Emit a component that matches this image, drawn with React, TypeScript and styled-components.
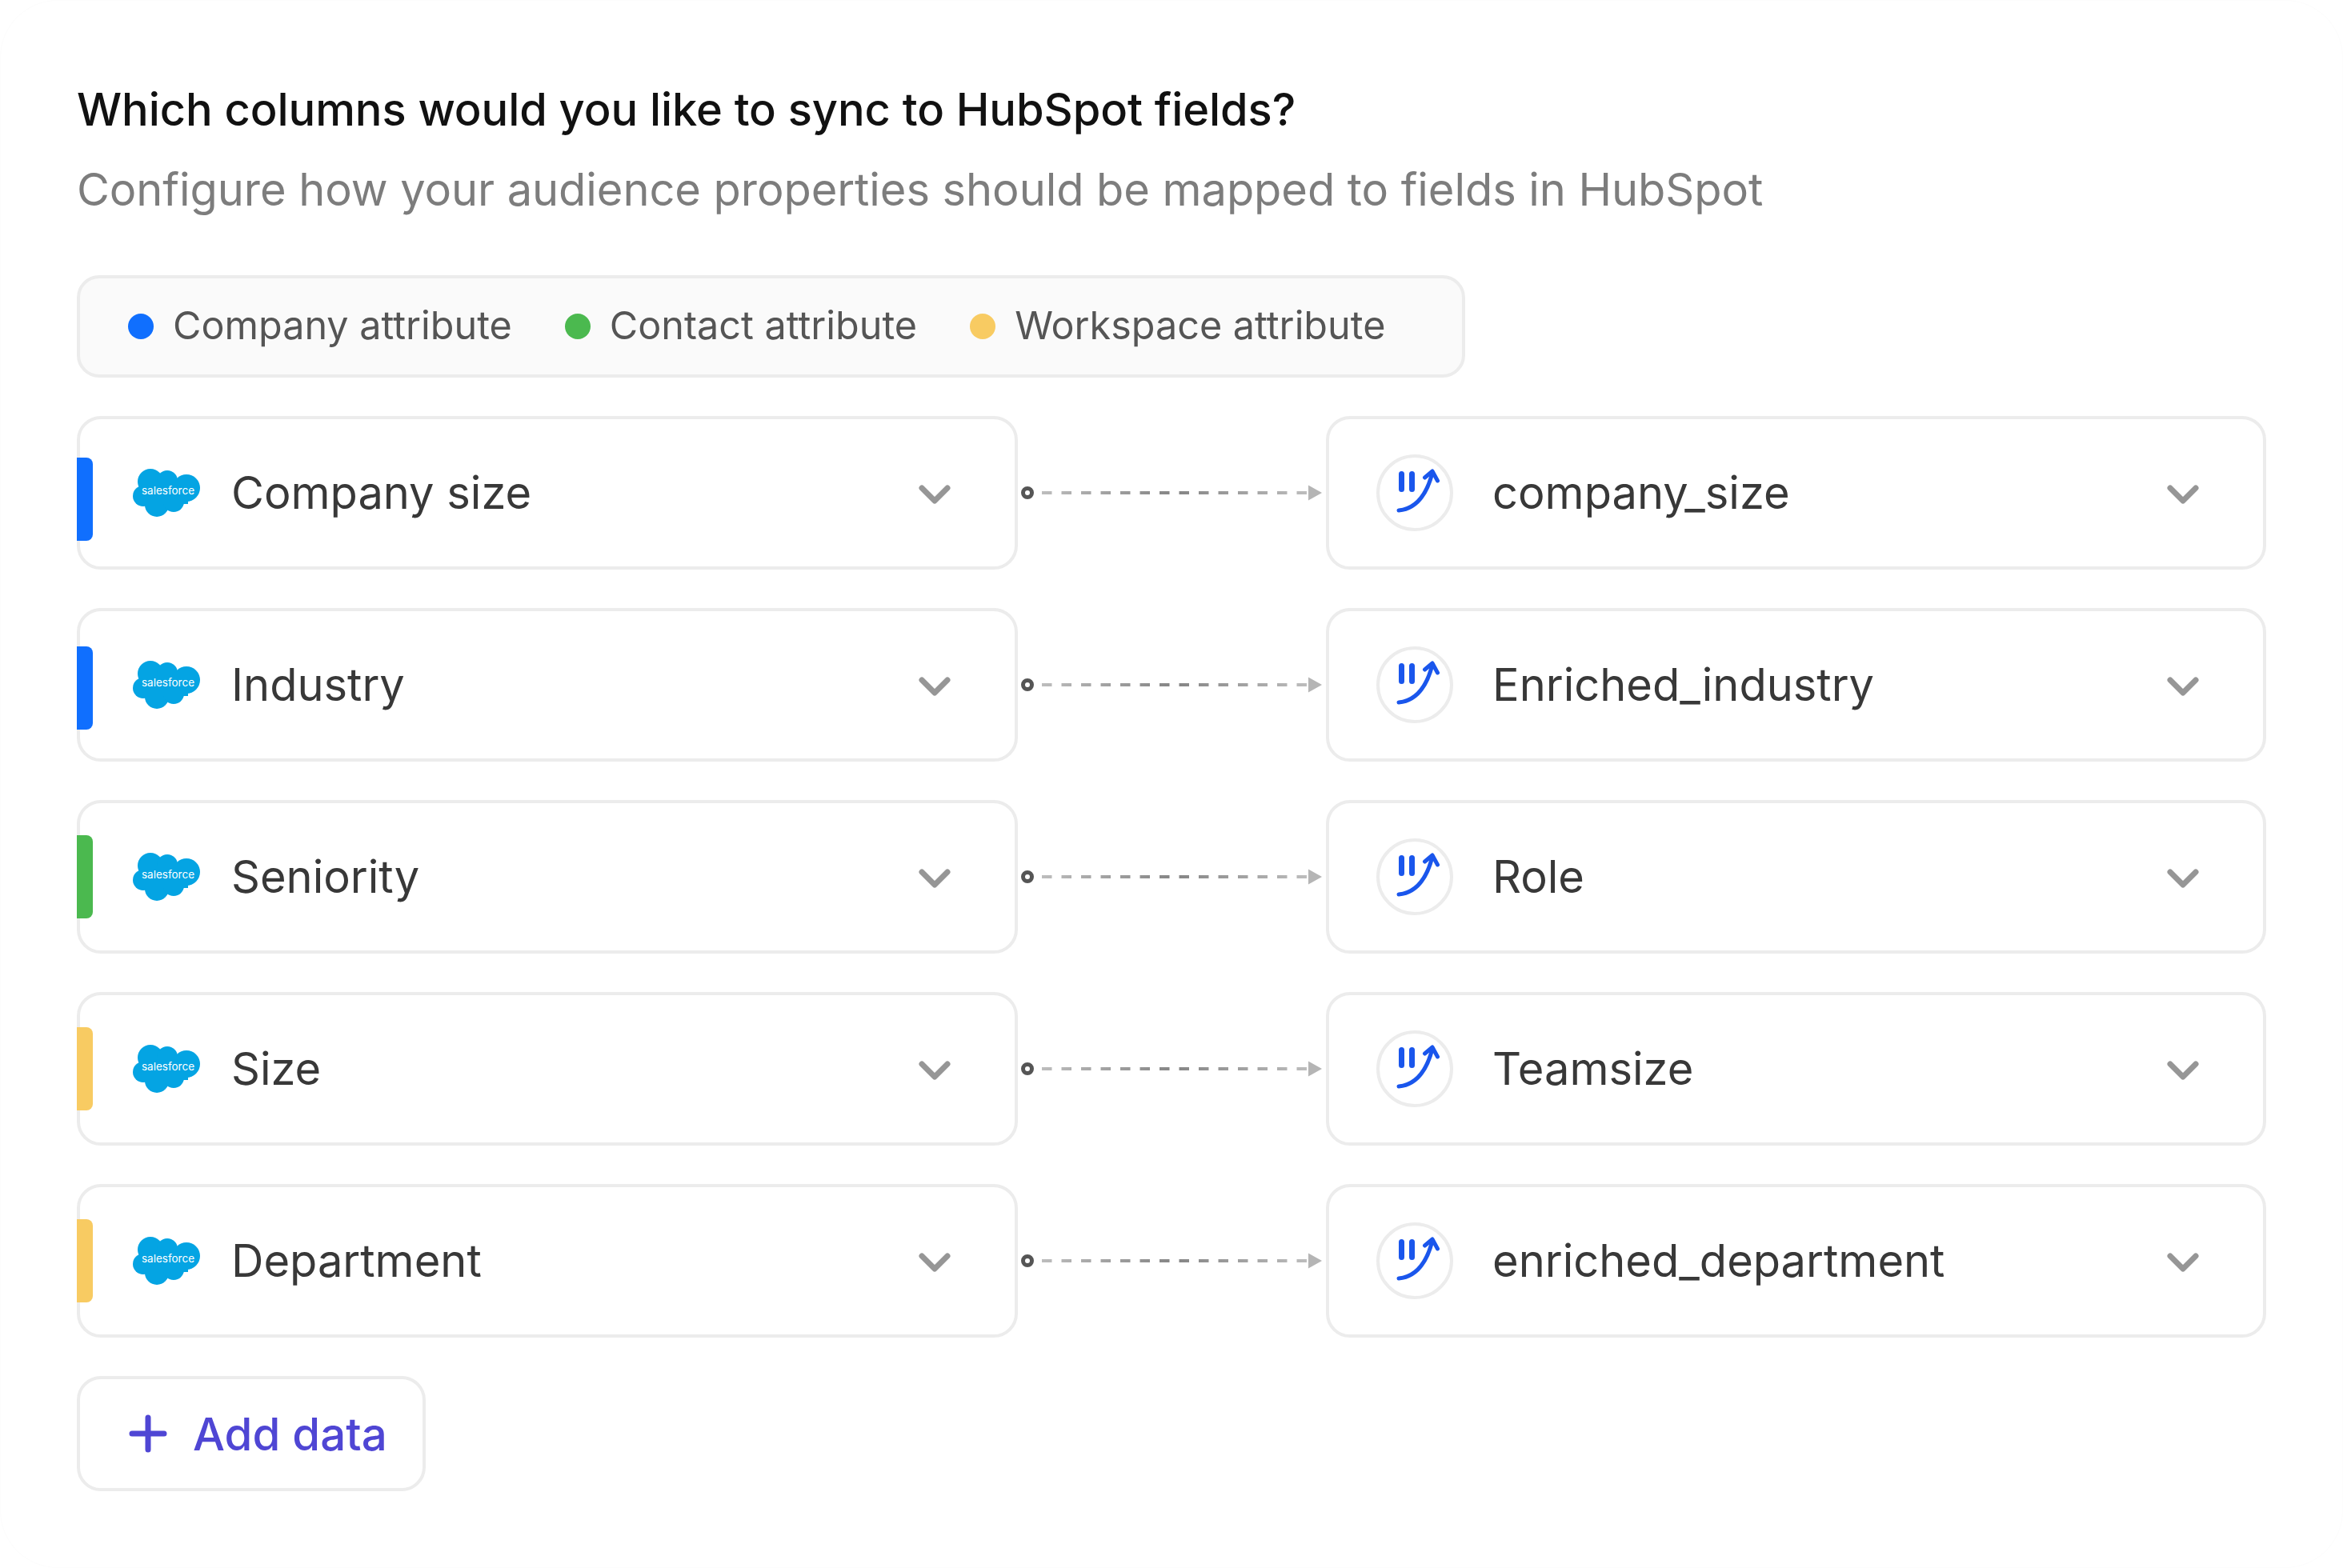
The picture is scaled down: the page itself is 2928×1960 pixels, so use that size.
import React from 'react';
import styled, { createGlobalStyle } from 'styled-components';

const GlobalStyle = createGlobalStyle`
  html, body {
    margin: 0;
    padding: 0;
    background: #ffffff;
  }
  * {
    box-sizing: border-box;
  }
`;

const Page = styled.div`
  width: 2928px;
  height: 1960px;
  padding: 98px 96px 0 96px;
  font-family: Inter, 'Liberation Sans', sans-serif;
  background: #ffffff;
  border-radius: 72px;
  box-shadow: inset 0 0 0 1px #fcfcfc;
`;

const Title = styled.h1`
  margin: 0;
  font-size: 56px;
  line-height: 78px;
  font-weight: 500;
  letter-spacing: -0.07px;
  color: #111111;
`;

const Subtitle = styled.p`
  margin: 22px 0 0;
  font-size: 56px;
  line-height: 78px;
  font-weight: 400;
  letter-spacing: -0.07px;
  color: #7d7d7d;
`;

const Legend = styled.div`
  display: flex;
  align-items: center;
  gap: 66px;
  width: 1735px;
  height: 128px;
  margin-top: 68px;
  padding: 0 60px;
  background: #fafafa;
  border: 4px solid #ececec;
  border-radius: 28px;
`;

const LegendItem = styled.div`
  display: flex;
  align-items: center;
  gap: 24px;
  font-size: 48.5px;
  line-height: 56px;
  color: #555555;
`;

const LegendText = styled.span`
  margin-top: -3px;
`;

const Dot = styled.span<{ $color: string }>`
  width: 32px;
  height: 32px;
  border-radius: 50%;
  background: ${({ $color }) => $color};
`;

const Rows = styled.div`
  display: flex;
  flex-direction: column;
  gap: 48px;
  margin-top: 48px;
`;

const Row = styled.div`
  display: flex;
  align-items: center;
`;

const Field = styled.div`
  position: relative;
  display: flex;
  align-items: center;
  height: 192px;
  background: #ffffff;
  border: 4px solid #ececec;
  border-radius: 30px;
`;

const SourceField = styled(Field)`
  width: 1176px;
  padding: 0 80px 0 66px;
`;

const TargetField = styled(Field)`
  width: 1175px;
  padding: 0 80px 0 59px;
`;

const Marker = styled.span<{ $color: string; $top: number }>`
  position: absolute;
  left: -4px;
  top: ${({ $top }) => $top}px;
  width: 20px;
  height: 104px;
  border-radius: 0 8px 8px 0;
  background: ${({ $color }) => $color};
`;

const FieldLabel = styled.span`
  flex: 1;
  font-size: 56px;
  color: #383838;
`;

const SourceLabel = styled(FieldLabel)`
  margin-left: 39px;
`;

const TargetLabel = styled(FieldLabel)`
  margin-left: 49px;
`;

const Badge = styled.span`
  display: flex;
  flex-shrink: 0;
  width: 96px;
  height: 96px;
  border: 4px solid #ececec;
  border-radius: 50%;
`;

const Chevron = styled.svg`
  display: block;
  margin-top: 4px;
`;

const Connector = styled.svg`
  display: block;
  width: 385px;
  height: 40px;
`;

const AddButton = styled.button`
  display: flex;
  align-items: center;
  gap: 32px;
  width: 436px;
  height: 144px;
  margin-top: 48px;
  padding: 0 0 0 61px;
  background: #ffffff;
  border: 4px solid #ececec;
  border-radius: 30px;
  font-family: inherit;
  font-size: 56.4px;
  font-weight: 500;
  color: #4f46d4;
`;

const BLUE = '#106ffe';
const GREEN = '#4bb94f';
const YELLOW = '#f8cb62';

const rows = [
  { source: 'Company size', target: 'company_size', color: BLUE, markerTop: 48 },
  { source: 'Industry', target: 'Enriched_industry', color: BLUE, markerTop: 44 },
  { source: 'Seniority', target: 'Role', color: GREEN, markerTop: 40 },
  { source: 'Size', target: 'Teamsize', color: YELLOW, markerTop: 40 },
  { source: 'Department', target: 'enriched_department', color: YELLOW, markerTop: 40 },
];

const SalesforceLogo = () => (
  <svg width="84" height="60" viewBox="0 0 84 60" style={{ flexShrink: 0 }}>
    <g fill="#04a4e3">
      <circle cx="22" cy="16" r="16" />
      <circle cx="43" cy="15" r="13" />
      <circle cx="67" cy="24" r="17" />
      <circle cx="13" cy="34" r="13" />
      <circle cx="30" cy="45" r="15" />
      <circle cx="51" cy="41" r="13" />
      <rect x="13" y="16" width="56" height="28" />
    </g>
    <text x="44" y="32" textAnchor="middle" fontSize="13.5" fill="#ffffff" fontFamily="Inter, sans-serif">
      salesforce
    </text>
  </svg>
);

const ChevronDown = () => (
  <Chevron width="40" height="24" viewBox="0 0 40 24" fill="none">
    <path d="M4 4 L20 20 L36 4" stroke="#969696" strokeWidth="7" strokeLinecap="round" strokeLinejoin="round" />
  </Chevron>
);

const TargetIcon = () => (
  <svg width="88" height="88" viewBox="4 4 88 88" fill="none" stroke="#1a56ec" strokeLinecap="round">
    <path d="M31.5 24.5 V43.5 M44.5 24.5 V43.5" strokeWidth="7" />
    <path d="M28 70 C50 68 63 50 70 23" strokeWidth="5" />
    <path d="M60.5 29 L70 21 L76.5 33" strokeWidth="5" strokeLinejoin="round" />
  </svg>
);

const Link = () => (
  <Connector viewBox="0 0 385 40" fill="none">
    <defs>
      <linearGradient id="dash-fade" gradientUnits="userSpaceOnUse" x1="30" y1="0" x2="362" y2="0">
        <stop offset="0" stopColor="#bdbdbd" />
        <stop offset="0.5" stopColor="#858585" />
        <stop offset="1" stopColor="#bdbdbd" />
      </linearGradient>
    </defs>
    <circle cx="12" cy="20" r="5.5" stroke="#555555" strokeWidth="5" />
    <path d="M30 20 H362" stroke="url(#dash-fade)" strokeWidth="4" strokeDasharray="12.5 12" />
    <path d="M363 10.5 L380 20 L363 29.5 Z" fill="#b5b5b5" />
  </Connector>
);

const App: React.FC = () => {
  return (
    <Page>
      <GlobalStyle />
      <Title>Which columns would you like to sync to HubSpot fields?</Title>
      <Subtitle>Configure how your audience properties should be mapped to fields in HubSpot</Subtitle>
      <Legend>
        <LegendItem>
          <Dot $color={BLUE} />
          <LegendText>Company attribute</LegendText>
        </LegendItem>
        <LegendItem>
          <Dot $color={GREEN} />
          <LegendText>Contact attribute</LegendText>
        </LegendItem>
        <LegendItem>
          <Dot $color={YELLOW} />
          <LegendText>Workspace attribute</LegendText>
        </LegendItem>
      </Legend>
      <Rows>
        {rows.map((row) => (
          <Row key={row.source}>
            <SourceField>
              <Marker $color={row.color} $top={row.markerTop} />
              <SalesforceLogo />
              <SourceLabel>{row.source}</SourceLabel>
              <ChevronDown />
            </SourceField>
            <Link />
            <TargetField>
              <Badge>
                <TargetIcon />
              </Badge>
              <TargetLabel>{row.target}</TargetLabel>
              <ChevronDown />
            </TargetField>
          </Row>
        ))}
      </Rows>
      <AddButton>
        <svg width="48" height="48" viewBox="0 0 48 48" fill="none">
          <path d="M24 4 V44 M4 24 H44" stroke="#4f46d4" strokeWidth="7" strokeLinecap="round" />
        </svg>
        Add data
      </AddButton>
    </Page>
  );
};

export default App;
